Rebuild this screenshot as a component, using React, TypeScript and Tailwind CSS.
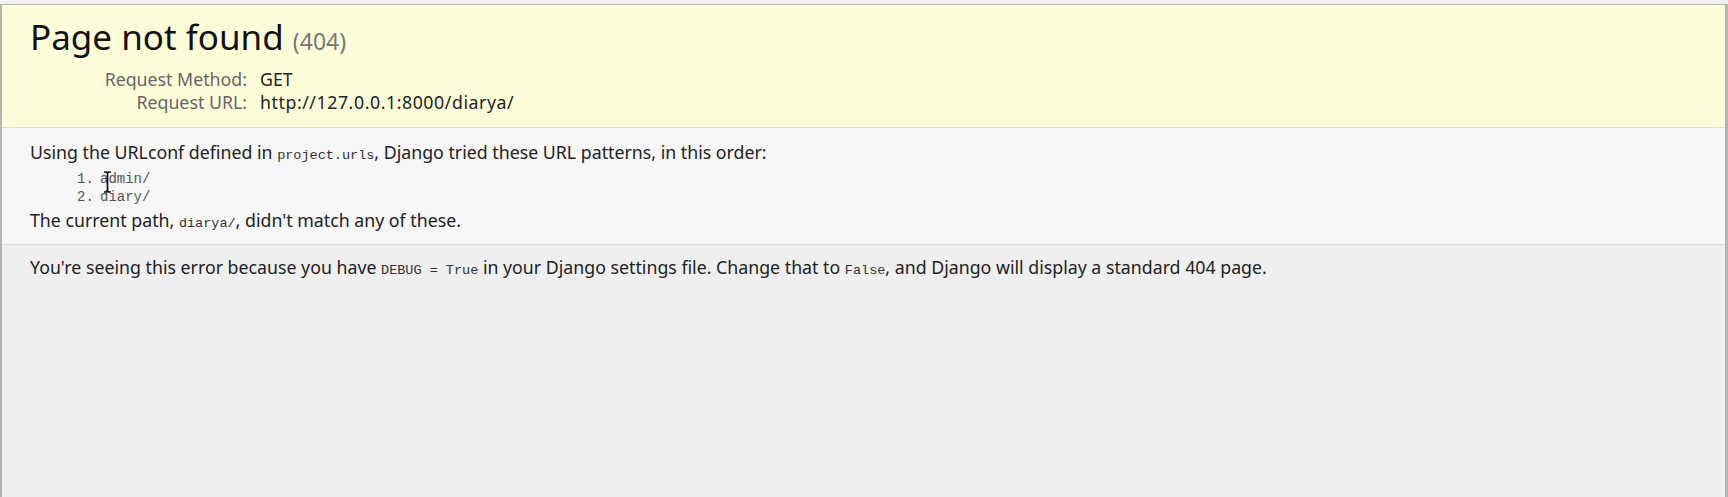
import React from 'react';

const sans = { fontFamily: '"Noto Sans", "Open Sans", sans-serif' };

const Mono: React.FC<{ children: React.ReactNode }> = ({ children }) => (
  <code className="font-['Liberation_Mono',monospace] text-[13.5px] text-[#333]">{children}</code>
);

export default function App() {
  return (
    <div className="h-[497px] w-full overflow-hidden bg-[#f0f0f0] pt-1" style={sans}>
      <div className="flex h-full flex-col border-t border-l-2 border-r-[3px] border-[#b4b4b4] bg-[#efefef] text-[#222]">
        {/* summary */}
        <div className="h-[123px] shrink-0 border-b border-[#dcdcd0] bg-[#fdfed9] pl-[28px] pt-[10px]">
          <h1 className="text-[35px] leading-[44px] text-[#111]">
            Page not found <span className="text-[23px] text-[#777]">(404)</span>
          </h1>
          <table className="mt-[5px] text-[17.75px] leading-[23px]">
            <tbody>
              <tr>
                <th className="w-[230px] pr-[13px] text-right font-normal text-[#666]">Request Method:</th>
                <td>GET</td>
              </tr>
              <tr>
                <th className="w-[230px] pr-[13px] text-right font-normal text-[#666]">Request URL:</th>
                <td className="tracking-[0.55px]">http://127.0.0.1:8000/diarya/</td>
              </tr>
            </tbody>
          </table>
        </div>

        {/* info */}
        <div className="h-[117px] shrink-0 border-b border-[#dcdcdc] bg-[#f6f6f6] pl-[28px] pt-[12px] text-[17.75px] leading-[24px]">
          <p>
            Using the URLconf defined in <Mono>project.urls</Mono>, Django tried these URL patterns, in this order:
          </p>
          <ol className="relative mb-[2px] mt-[3px] pl-[47px] font-['Liberation_Mono',monospace] text-[14px] leading-[17.5px] text-[#555]">
            <li className="flex">
              <span className="w-[23px]">1.</span>
              <span>admin/</span>
            </li>
            <li className="flex">
              <span className="w-[23px]">2.</span>
              <span>diary/</span>
            </li>
            <svg
              className="absolute left-[73px] top-[0px]"
              width="9"
              height="22"
              viewBox="0 0 9 22"
            >
              <path d="M1 1h2.5l1 1 1-1H8M4.5 2v18M1 21h2.5l1-1 1 1H8" fill="none" stroke="#111" strokeWidth="1.7" />
            </svg>
          </ol>
          <p>
            The current path, <Mono>diarya/</Mono>, didn't match any of these.
          </p>
        </div>

        {/* explanation */}
        <div className="flex-1 bg-[#efefef] pl-[28px] pt-[10px] text-[17.75px] leading-[24px]">
          <p>
            You're seeing this error because you have <Mono>DEBUG = True</Mono> in your Django settings file. Change
            that to <Mono>False</Mono>, and Django will display a standard 404 page.
          </p>
        </div>
      </div>
    </div>
  );
}
